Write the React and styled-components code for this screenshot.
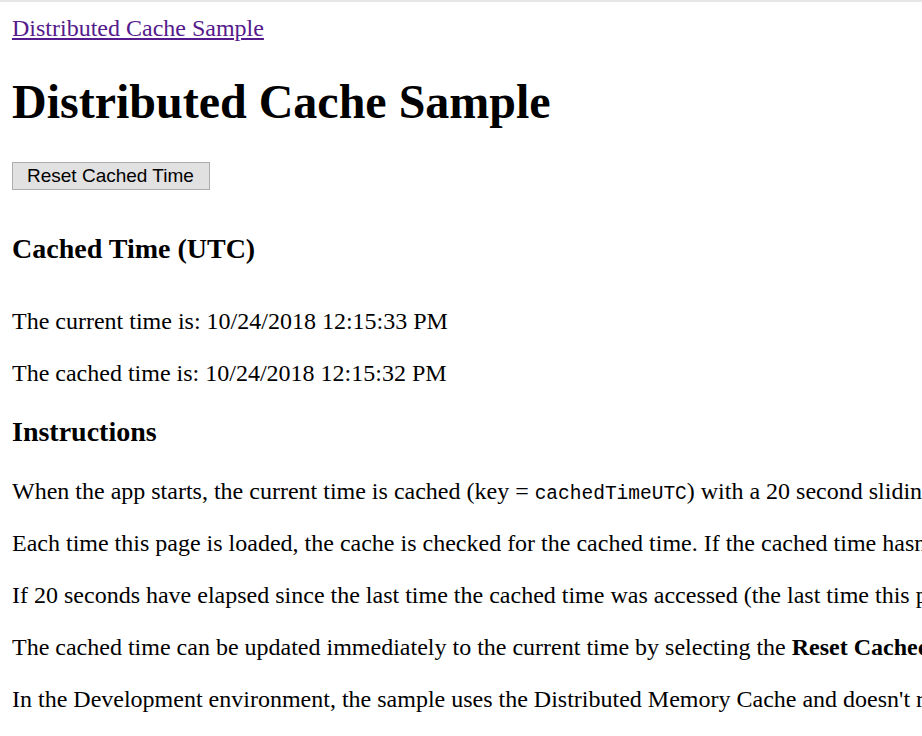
import React from 'react';
import styled, { createGlobalStyle } from 'styled-components';

const GlobalStyle = createGlobalStyle`
  html {
    overflow: hidden;
    border-top: 2px solid #e6e6e6;
  }
  body {
    margin: 12px 0 0 12px;
    font-family: 'Liberation Serif', 'Times New Roman', serif;
    font-size: 24px;
    color: #000;
    background: #fff;
    white-space: nowrap;
  }
`;

const Nav = styled.div`
  line-height: 28px;
`;

const NavLink = styled.a`
  color: #551a8b;
  text-decoration: underline;
`;

const Title = styled.h1`
  font-size: 48px;
  font-weight: bold;
  line-height: 55px;
  margin: 32px 0;
`;

const ResetForm = styled.form`
  margin: 4px 0 0;
`;

const ResetButton = styled.button`
  font-family: 'Liberation Sans', Arial, sans-serif;
  font-size: 19px;
  color: #000;
  background: #e1e1e1;
  border: 1px solid #adadad;
  border-radius: 0;
  padding: 0 15px 0 14px;
  height: 28px;
  line-height: 26px;
  margin: 0;
`;

const SubHeading = styled.h3`
  font-size: 28px;
  font-weight: bold;
  line-height: 32px;
  margin: ${(p) => (p.$first ? '43px 0 42px' : '29px 0')};
`;

const Para = styled.p`
  line-height: 28px;
  margin: 24px 0;
`;

const Code = styled.code`
  font-family: 'Liberation Mono', 'Courier New', monospace;
  font-size: 19.5px;
  line-height: 1;
`;

export default function App() {
  return (
    <>
      <GlobalStyle />
      <Nav>
        <NavLink href="#">Distributed Cache Sample</NavLink>
      </Nav>
      <Title>Distributed Cache Sample</Title>
      <ResetForm onSubmit={(e) => e.preventDefault()}>
        <ResetButton type="submit">Reset Cached Time</ResetButton>
      </ResetForm>
      <SubHeading $first>Cached Time (UTC)</SubHeading>
      <Para>The current time is: 10/24/2018 12:15:33 PM</Para>
      <Para>The cached time is: 10/24/2018 12:15:32 PM</Para>
      <SubHeading>Instructions</SubHeading>
      <Para>
        When the app starts, the current time is cached (key = <Code>cachedTimeUTC</Code>) with a
        20 second sliding expiration.
      </Para>
      <Para>
        Each time this page is loaded, the cache is checked for the cached time. If the cached time
        hasn't expired, the time is displayed.
      </Para>
      <Para>
        If 20 seconds have elapsed since the last time the cached time was accessed (the last time
        this page was loaded), the page displays Cached Time Expired.
      </Para>
      <Para>
        The cached time can be updated immediately to the current time by selecting the{' '}
        <strong>Reset Cached Time</strong> button.
      </Para>
      <Para>
        In the Development environment, the sample uses the Distributed Memory Cache and doesn't
        require an actual cache service.
      </Para>
    </>
  );
}
